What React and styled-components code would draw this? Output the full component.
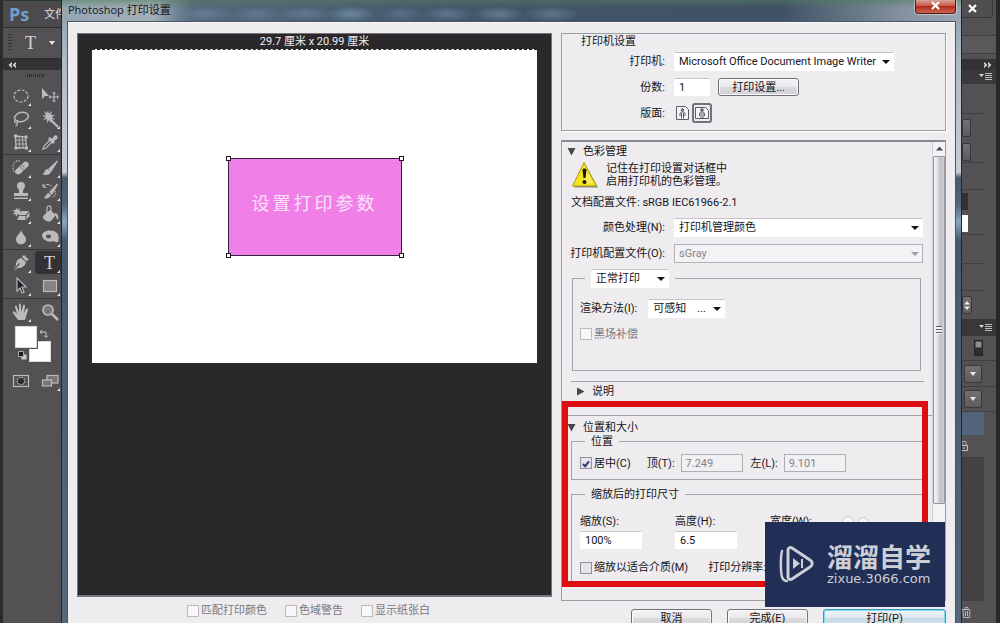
import React from "react";
import styled, { createGlobalStyle, css } from "styled-components";

const Global = createGlobalStyle`
  *, *::before, *::after { box-sizing: border-box; }
  html, body { margin: 0; height: 100%; background: #4f4d50; }
  #root { height: 100%; }
  body, button, input, select {
    font-family: Roboto, "Noto Sans CJK SC", sans-serif;
    font-size: 11px;
    line-height: 13px;
    color: #151417;
  }
`;

/* ---------- application behind the dialog ---------- */

const Desktop = styled.div`
  position: relative;
  height: 100vh;
  min-height: 600px;
  overflow: hidden;
  display: flex;
  justify-content: space-between;
  background: #4f4d50;
`;

const ToolDock = styled.aside`
  width: 64px;
  display: flex;
  flex-direction: column;
  border-left: 3px solid #2c2b2e;
  border-top: 1px solid #2b3a2f;
  background: #535154;
`;

const MenuBar = styled.header`
  height: 27px;
  display: flex;
  align-items: center;
  gap: 15px;
  padding-left: 6px;
  background: #4c4a4d;
  border-bottom: 1px solid #2d2b2e;
  color: #e4e2e5;
  white-space: nowrap;
`;

const Brand = styled.strong`
  font-family: "Open Sans", sans-serif;
  font-size: 18px;
  line-height: 24px;
  color: #6f9fcb;
`;

const OptionsBar = styled.div`
  height: 31px;
  display: flex;
  align-items: center;
  gap: 13px;
  padding-left: 5px;
  border-bottom: 1px solid #2e2c2f;
  color: #d8d6d9;
`;

const Grip = styled.span`
  width: 4px;
  height: 18px;
  background: repeating-linear-gradient(#363437 0 1px, transparent 1px 3px);
`;

const TypeGlyph = styled.span`
  font-family: "Liberation Serif", serif;
  font-size: 18px;
  line-height: 18px;
  color: #d2d0d3;
`;

const CollapseStrip = styled.div`
  height: 11px;
  display: flex;
  align-items: center;
  justify-content: ${(p) => (p.$end ? "flex-end" : "flex-start")};
  padding: ${(p) => (p.$end ? "0 4px 0 0" : "0 0 0 5px")};
  background: #343235;
`;

const ToolGrip = styled.div`
  width: 18px;
  height: 3px;
  margin: 4px 0 7px 24px;
  background: repeating-linear-gradient(90deg, #2f2d30 0 1px, transparent 1px 2px);
`;

const ToolGroup = styled.div`
  display: grid;
  grid-template-columns: 29px 29px;
  grid-auto-rows: 23px;
  padding: 0 0 1px 3px;
  margin-bottom: 1px;
  border-bottom: ${(p) => (p.$last ? "0" : "1px solid #39373a")};
`;

const ToolButton = styled.button`
  position: relative;
  display: grid;
  place-items: center;
  padding: 0;
  border: 0;
  border-radius: 3px;
  background: ${(p) => (p.$active ? "#333134" : "transparent")};
  color: #bcbabd;
  ${(p) =>
    p.$more &&
    css`
      &::after {
        content: "";
        position: absolute;
        right: 4px;
        bottom: 1px;
        border-left: 3px solid transparent;
        border-bottom: 3px solid #e6e4e7;
      }
    `}
`;

const SwatchArea = styled.div`
  display: grid;
  grid-template-columns: 14px 8px 14px;
  grid-template-rows: 15px 7px 14px;
  margin: 1px 0 7px 12px;
`;

const Swatch = styled.button`
  padding: 0;
  background: #fff;
  border: 1px solid #d9d7da;
  outline: ${(p) => (p.$front ? "1px solid #59575a" : "0")};
  z-index: ${(p) => (p.$front ? 1 : 0)};
  grid-area: ${(p) => (p.$front ? "1 / 1 / 3 / 3" : "2 / 2 / 4 / 4")};
`;

const MiniIcon = styled.span`
  grid-area: ${(p) => p.$area};
  display: grid;
  place-items: center;
`;

const PanelDock = styled.aside`
  width: 38px;
  display: flex;
  flex-direction: column;
  background: #535154;
  border-right: 4px solid #29272b;
`;

const WindowClose = styled.button`
  height: 18px;
  width: 31px;
  padding: 0 10px 0 0;
  display: grid;
  place-items: center;
  background: #504e51;
  border: 1px solid #39373a;
  border-top: 0;
  border-left: 0;
  border-radius: 0 0 3px 0;
`;

const DockBlock = styled.div`
  height: ${(p) => p.$h}px;
  display: flex;
  align-items: center;
  justify-content: ${(p) => p.$justify || "flex-start"};
  padding: ${(p) => p.$pad || "0"};
  background: ${(p) => p.$bg || "transparent"};
  border-bottom: ${(p) => (p.$line ? "1px solid #403e41" : "0")};
  margin-right: ${(p) => (p.$inset ? "12px" : "0")};
`;

const DockButton = styled.button`
  width: ${(p) => p.$w || 18}px;
  height: 18px;
  padding: 0;
  display: grid;
  place-items: center;
  background: linear-gradient(#727073, #5d5b5e);
  border: 1px solid #39373a;
  border-radius: 2px;
`;

const Chip = styled.span`
  width: ${(p) => p.$w}px;
  height: 17px;
  background: ${(p) => p.$bg};
`;

const DockFill = styled.div`
  flex: 1;
  margin-right: 12px;
  background: #434144;
`;

/* ---------- dialog ---------- */

const Dialog = styled.div`
  position: absolute;
  top: 0;
  left: 61px;
  right: 38px;
  display: flex;
  flex-direction: column;
  padding: 0 6px;
  border: solid #1f262e;
  border-width: 0 1px;
  background: linear-gradient(#8b9aab 0, #aebac6 60px, #c5ced6 172px, #46586a 178px, #53667a 205px, #86a7c2 222px, #475a6d 240px, #56687a 100%);
`;

const TitleBar = styled.div`
  height: 22px;
  margin: 0 -6px;
  display: flex;
  align-items: flex-start;
  justify-content: space-between;
  padding: 0 5px 0 6px;
  background:
    linear-gradient(rgba(82, 124, 92, 0.55), transparent 8px),
    radial-gradient(ellipse 30px 8px at 142px 14px, rgba(115, 145, 170, 0.5), transparent),
    radial-gradient(ellipse 26px 8px at 195px 14px, rgba(115, 145, 170, 0.45), transparent),
    radial-gradient(ellipse 28px 8px at 243px 14px, rgba(115, 145, 170, 0.5), transparent),
    radial-gradient(ellipse 24px 8px at 289px 14px, rgba(130, 165, 195, 0.6), transparent),
    radial-gradient(ellipse 22px 8px at 340px 14px, rgba(115, 145, 170, 0.4), transparent),
    radial-gradient(ellipse 26px 8px at 386px 14px, rgba(125, 150, 175, 0.5), transparent),
    radial-gradient(ellipse 26px 8px at 437px 14px, rgba(135, 160, 180, 0.5), transparent),
    radial-gradient(ellipse 28px 8px at 490px 14px, rgba(125, 150, 170, 0.5), transparent),
    linear-gradient(90deg, #95a5b2 0, #a3b0b9 90px, #55697c 130px, #43566a 45%, #3f5164 80%, #8593a2 94%, #9aa7b3);
`;

const Title = styled.h1`
  margin: 0;
  padding-top: 2px;
  font-family: "Open Sans", "Noto Sans CJK SC", sans-serif;
  font-size: 11px;
  line-height: 15px;
  font-weight: 400;
`;

const CloseButton = styled.button`
  width: 41px;
  height: 14px;
  padding: 0 0 3px;
  display: grid;
  place-items: center;
  border: 1px solid #4d1a15;
  border-top: 0;
  border-radius: 0 0 4px 4px;
  background: linear-gradient(#d9a096, #c8584a 45%, #b02c1b 50%, #cf6650);
  box-shadow: 0 0 1px 1px rgba(255, 255, 255, 0.45);
`;

const DialogBody = styled.main`
  display: flex;
  gap: 9px;
  padding: 10px 9px;
  min-height: 610px;
  background: #eeecef;
  border-top: 1px solid #f8f8fa;
  outline: 1px solid #4b5664;
`;

const PreviewColumn = styled.section`
  flex: 1;
  min-width: 0;
  display: flex;
  flex-direction: column;
`;

const PreviewPane = styled.div`
  height: 564px;
  padding: 0 14px;
  background: #2a282b;
  border: 1px solid #77757b;
  border-bottom-width: 2px;
`;

const PaperSize = styled.div`
  height: 15px;
  line-height: 15px;
  text-align: center;
  color: #f1eff2;
`;

const Paper = styled.div`
  aspect-ratio: 445 / 314;
  display: grid;
  place-items: center;
  background: #fff;
  border-top: 1px dashed #2a282b;
`;

const Artwork = styled.div`
  position: relative;
  width: 174px;
  height: 98px;
  padding-bottom: 6px;
  display: grid;
  place-items: center;
  background: #f080e8;
  border: 1px solid #33203a;
  color: #fbe0fa;
  font-size: 18px;
  line-height: 26px;
  font-weight: 400;
  letter-spacing: 3px;
`;

const Handle = styled.i`
  position: absolute;
  width: 5px;
  height: 5px;
  background: #fff;
  border: 1px solid #1c141f;
  ${(p) => p.$v}: -3px;
  ${(p) => p.$h}: -3px;
`;

const PreviewOptions = styled.div`
  display: flex;
  justify-content: center;
  gap: 18px;
  padding: 7px 12px 0 0;
`;

const CheckLabel = styled.label`
  display: inline-flex;
  align-items: center;
  gap: 2px;
  white-space: nowrap;
  color: ${(p) => (p.$dim ? "#7a787c" : "inherit")};
`;

const CheckBox = styled.input`
  appearance: none;
  width: 12px;
  height: 12px;
  margin: 0;
  display: grid;
  place-items: center;
  background: ${(p) => (p.disabled ? "#f7f6f8" : "#e3e4ea")};
  border: 1px solid ${(p) => (p.disabled ? "#bcbabf" : "#8f9098")};
  &:checked::after {
    content: "";
    width: 4px;
    height: 7px;
    border: solid #2b3a78;
    border-width: 0 2px 2px 0;
    transform: rotate(40deg);
  }
`;

const SettingsColumn = styled.section`
  position: relative;
  flex: 0 0 385px;
  display: flex;
  flex-direction: column;
`;

const PrinterGroup = styled.div`
  height: 98px;
  border: 1px solid #9e9ca3;
  box-shadow: 1px 1px 0 #fff;
`;

const GroupTitle = styled.h2`
  margin: 0 0 3px 19px;
  font-size: 11px;
  line-height: 15px;
  font-weight: 400;
`;

const FormRow = styled.div`
  display: grid;
  grid-template-columns: 103px 1fr;
  column-gap: 9px;
  align-items: center;
  min-height: ${(p) => p.$h || 26}px;
`;

const RowLabel = styled.label`
  text-align: right;
  white-space: nowrap;
`;

const Inline = styled.div`
  display: flex;
  align-items: center;
  gap: ${(p) => p.$gap || 8}px;
  white-space: nowrap;
`;

const SelectWrap = styled.span`
  position: relative;
  display: block;
  width: ${(p) => p.$w}px;
  height: 19px;
`;

const NativeSelect = styled.select`
  appearance: none;
  width: 100%;
  height: 100%;
  padding: 0 0 0 4px;
  background: ${(p) => (p.disabled ? "#f3f2f4" : "#fff")};
  border: 1px solid ${(p) => (p.disabled ? "#b4b2b8" : "#fff")};
  border-top-color: ${(p) => (p.disabled ? "#b4b2b8" : "#c4c2c8")};
  border-radius: 0;
  color: ${(p) => (p.disabled ? "#858388" : "#151417")};
  opacity: 1;
`;

const Caret = styled.i`
  position: absolute;
  right: 4px;
  top: 8px;
  pointer-events: none;
  border: 4px solid transparent;
  border-top-color: ${(p) => (p.$dim ? "#a09ea4" : "#111")};
  border-bottom: 0;
`;

const TextInput = styled.input`
  width: ${(p) => p.$w || 62}px;
  height: 18px;
  padding: 0 4px;
  border: 1px solid ${(p) => (p.disabled ? "#b1afb6" : "#fff")};
  border-top-color: ${(p) => (p.disabled ? "#b1afb6" : "#c9c7cc")};
  background: ${(p) => (p.disabled ? "#f1f0f2" : "#fff")};
  color: ${(p) => (p.disabled ? "#858388" : "#151417")};
`;

const PushButton = styled.button`
  width: ${(p) => p.$w}px;
  height: 18px;
  padding: 0;
  border: 1px solid ${(p) => (p.$primary ? "#3d95b5" : "#737178")};
  border-radius: 3px;
  background: ${(p) => (p.$primary
    ? "linear-gradient(#f0f6f9, #dbe9f0 50%, #c6dbe6 52%, #d6e8f0)"
    : "linear-gradient(#f4f3f5, #e9e8eb 50%, #dbdadd 52%, #d2d1d5)")};
  box-shadow: inset 0 0 0 1px ${(p) => (p.$primary ? "#7fdcf5" : "#fbfbfc")};
`;

const OrientButton = styled.button`
  width: ${(p) => (p.$on ? 20 : 16)}px;
  height: 20px;
  padding: 0;
  display: grid;
  place-items: center;
  border: ${(p) => (p.$on ? "2px solid #737078" : "0")};
  border-radius: 3px;
  background: transparent;
`;

const ScrollPanel = styled.div`
  height: 461px;
  margin-top: 9px;
  display: flex;
  border: 1px solid #9e9ca3;
  border-top: 2px solid #8b898f;
`;

const ScrollContent = styled.div`
  flex: 1;
  min-width: 0;
`;

const ScrollBar = styled.div`
  width: 13px;
  padding-top: 4px;
  display: flex;
  flex-direction: column;
  align-items: center;
  border-left: 1px solid #d2d0d5;
  background: #f3f2f5;
`;

const ScrollThumb = styled.div`
  width: 12px;
  height: 348px;
  margin-top: 5px;
  display: grid;
  place-items: center;
  border: 1px solid #98969d;
  border-radius: 1px;
  background: linear-gradient(90deg, #f4f3f6, #e0dfe4 40%, #bfbdc6 60%, #d0ced5);
`;

const ThumbGrip = styled.i`
  width: 6px;
  height: 8px;
  background: repeating-linear-gradient(#5e5c63 0 1px, #f1f0f3 1px 3px);
`;

const SectionHead = styled.h2`
  margin: 0;
  height: 18px;
  display: flex;
  align-items: center;
  gap: 7px;
  padding-left: ${(p) => (p.$closed ? 14 : 5)}px;
  font-size: 11px;
  font-weight: 400;
`;

const Warning = styled.div`
  display: flex;
  align-items: center;
  gap: 7px;
  height: 30px;
  padding-left: 9px;
`;

const WarningText = styled.p`
  margin: 0;
  line-height: 13px;
`;

const ProfileLine = styled.p`
  margin: 5px 0 4px 9px;
  line-height: 15px;
`;

const Frame = styled.fieldset`
  min-width: 0;
  margin: ${(p) => p.$m};
  padding: ${(p) => p.$p};
  border: 1px solid #a5a3aa;
  height: ${(p) => p.$h}px;
`;

const Legend = styled.legend`
  margin-left: 5px;
  padding: 0 6px;
  line-height: 15px;
`;

const Rule = styled.hr`
  margin: ${(p) => p.$m};
  border: 0;
  border-top: 1px solid #a3a1a8;
`;

const SizeGrid = styled.div`
  display: grid;
  grid-template-columns: 95px 95px 1fr;
  padding-bottom: 12px;
`;

const SizeField = styled.label`
  display: flex;
  flex-direction: column;
  gap: 3px;
  white-space: nowrap;
`;

const Highlight = styled.div`
  position: absolute;
  top: 368px;
  left: 1px;
  width: 366px;
  height: 186px;
  border: 6px solid #dc0f12;
  pointer-events: none;
`;

const Badge = styled.div`
  position: absolute;
  top: 489px;
  right: 1px;
  width: 180px;
  height: 85px;
  display: flex;
  align-items: center;
  gap: 13px;
  padding-left: 14px;
  background: #212e56;
  color: #cdcfd6;
`;

const BadgeText = styled.div`
  display: flex;
  flex-direction: column;
`;

const BadgeName = styled.span`
  font-size: 26px;
  line-height: 28px;
  font-weight: 700;
`;

const BadgeUrl = styled.span`
  font-family: "DejaVu Sans", sans-serif;
  font-size: 13px;
  line-height: 13px;
`;

const Actions = styled.div`
  display: flex;
  justify-content: flex-end;
  gap: 15px;
  padding-top: 8px;
`;

/* ---------- drawings ---------- */

const Svg = ({ children, w = 18, h = 18, box = "0 0 18 18" }) => (
  <svg width={w} height={h} viewBox={box} fill="none" stroke="currentColor" strokeWidth="1.2" aria-hidden="true">
    {children}
  </svg>
);

const icons = {
  marquee: <Svg><ellipse cx="9" cy="9" rx="7" ry="6" strokeDasharray="3 1.4" /></Svg>,
  move: <Svg><path d="M1 1v11l3-3h4z" fill="currentColor" stroke="none" /><path d="M13 6v8M9 10h8" /><path d="M13 4.500l-2 2h4zM13 15.500l-2-2h4zM7.500 10l2-2v4zM18 10l-2-2v4z" fill="currentColor" stroke="none" /></Svg>,
  lasso: <Svg><ellipse cx="9.500" cy="7" rx="7" ry="4.500" transform="rotate(-12 9.500 7)" strokeWidth="1.500" /><path d="M4 10c-2 0-2 3 0 3 2 0 2-2 .6-2.600M5 12.500c1 1.500 0 3-1.500 3.500" /></Svg>,
  wand: <Svg><path d="M9.500 9.500L17 17" strokeWidth="2.200" /><path d="M7 0l1 4 3-3-1 4 4 0-3 2 3 3-4-1 0 4-2-3-2 3 0-4-4 1 3-3-4-1 4-1-2-4 3 2z" fill="currentColor" stroke="none" /></Svg>,
  crop: <Svg><path d="M3.500 3l10 1 1 11H4z" strokeWidth="1.300" /><path d="M7 3.500l.5 11.500M10.500 4l.5 11M4 7h10M4 11h10.500" strokeWidth="0.900" /><path d="M2 1.500h3v3H2zM12.500 2.500h3v3h-3zM13 13.500h3v3h-3zM2.500 13.500h3v3h-3z" fill="currentColor" stroke="none" /></Svg>,
  dropper: <Svg><path d="M11 6l2-3c2-2 5 1 3 3l-3 2 1 1-2 2-5-5 2-2z" fill="currentColor" stroke="none" /><path d="M9 7l-6 6-1 3 3-1 6-6" /></Svg>,
  heal: <Svg><path d="M8 2C4 1 1 4 1 8c0 3 1 5 3 6" strokeDasharray="1.500 1.300" /><rect x="2" y="6" width="16" height="6" rx="3" transform="rotate(-43 10 9)" fill="currentColor" stroke="none" /><path d="M8 8l4 3M10 6l3 3" stroke="#666468" strokeDasharray="1 1" /></Svg>,
  brush: <Svg><path d="M16.500 2L8 10l2 2z" fill="currentColor" /><path d="M1 15c3 0 2-5 6-5l3 3c-1 3-5 4-9 2z" fill="currentColor" stroke="none" /></Svg>,
  stamp: <Svg><path d="M7 9c0-2-2-3-2-5a4 4 0 018 0c0 2-2 3-2 5v2h5v3H2v-3h5zM2 15.500h14V17H2z" fill="currentColor" stroke="none" /></Svg>,
  history: <Svg><path d="M16.500 2L9 10l2 2z" fill="currentColor" /><path d="M2 16c3 0 2-4 6-5l2 2c-1 3-4 4-8 3z" fill="currentColor" stroke="none" /><path d="M2 5c2-3 6-3 8-1M2 2v3.500h3.500" strokeDasharray="3 1" /><path d="M14 9c2 3 0 5-3 6" strokeDasharray="1.500 1" /></Svg>,
  eraser: <Svg><path d="M5 3l1 2 2-2-.5 3L11 7 8 8l1 3-3-2-2 3-.5-3-3 .5L3 7 0 5l3 .3z" fill="currentColor" stroke="none" /><path d="M10 6h7l-3 4H7zM7 11h6.500v4H5zM14.500 11L17.500 7v4l-3 3.500z" fill="currentColor" stroke="none" /></Svg>,
  bucket: <Svg><path d="M2 11l7-6 6 5-5 6c-3 2-9-2-8-5z" fill="currentColor" stroke="none" /><path d="M6 9V3c0-3 4-3 4 0v5" /><path d="M14 8c3 0 4 4 3 7-2-1-1-3-3-5z" fill="currentColor" stroke="none" /></Svg>,
  blur: <Svg><path d="M9 2c1 4 5 6 5 9.500a5 5 0 01-10 0C4 8 8 6 9 2z" fill="currentColor" stroke="none" /></Svg>,
  sponge: <Svg><path fillRule="evenodd" d="M1 7c1-5 11-6 15-2 2 2 2 6 1 9-2 1-3-1-5-1-3 1-5 1-8-1C2 11 1 9 1 7zm4 1.500a2.500 2 0 005 0 2.500 2 0 00-5 0z" fill="currentColor" stroke="none" /></Svg>,
  pen: <Svg><path d="M12 1l5 5-3 1-4-4z" fill="currentColor" stroke="none" /><path d="M9 4l5 4c-1 4-4 6-8 6l-4 2.500L8 10 7 9l-5.500 6.500L4 11c0-4 2-6 5-7z" fill="currentColor" stroke="none" /></Svg>,
  path: <Svg><path d="M5 1v13l3-3 2 5 2-1-2-5h4z" fill="#222024" stroke="#b9b7bb" /></Svg>,
  shape: <Svg><rect x="2.500" y="3.500" width="13" height="11" fill="#858387" /></Svg>,
  hand: <Svg><path d="M6 17L1 10c-1-2 1-2 2-1l2 2L3 4c0-2 2-2 2 0l2 5V2c0-2 2-2 2 0v7l2-6c.5-2 2-1 2 0l-1 7 2-4c1-1 2.500-.5 2 1l-3 10z" fill="currentColor" stroke="none" /></Svg>,
  zoom: <Svg><circle cx="7" cy="7" r="5" fill="#777579" strokeWidth="1.700" /><path d="M11 11l6 6" strokeWidth="2.500" /></Svg>,
  mask: <Svg><rect x="1.500" y="3.500" width="15" height="11" /><circle cx="9" cy="9" r="3.700" fill="#2c2a2d" strokeDasharray="1.500 1" /></Svg>,
  screen: <Svg><rect x="6" y="3.500" width="11" height="7.500" fill="#777579" /><rect x="1.500" y="8" width="9" height="6" fill="#777579" /></Svg>,
};

const Arrows = ({ flip }) => (
  <svg width="8" height="6" viewBox="0 0 8 6" aria-hidden="true">
    <path d={flip ? "M0 0l3.500 3L0 6V4l1-1-1-1zM4 0l3.500 3L4 6V4l1-1-1-1z" : "M4 0L.5 3 4 6V4L3 3l1-1zM8 0L4.500 3 8 6V4L7 3l1-1z"} fill="#dddbde" />
  </svg>
);

const SmallCaret = () => (
  <svg width="6" height="4" viewBox="0 0 6 4" aria-hidden="true"><path d="M0 0h6L3 4z" fill="#e9e7ea" /></svg>
);

const PanelMenu = () => (
  <svg width="13" height="8" viewBox="0 0 13 8" aria-hidden="true">
    <path d="M0 1h5L2.500 4z" fill="#d9d7da" />
    <path d="M6 .5h7M6 2.500h7M6 4.500h7M6 6.500h7" stroke="#bab8bb" strokeWidth="1" />
  </svg>
);

const Cross = () => (
  <svg width="9" height="9" viewBox="0 0 9 9" aria-hidden="true">
    <path d="M1 1l7 7M8 1L1 8" stroke="#fff" strokeWidth="2.200" />
  </svg>
);

const Disclosure = ({ closed }) => (
  <svg width="9" height="9" viewBox="0 0 9 9" aria-hidden="true">
    <path d={closed ? "M1 0.500v8l7.500-4z" : "M0.500 1h8l-4 7.500z"} fill="#48464b" />
  </svg>
);

const WarningIcon = () => (
  <svg width="28" height="28" viewBox="0 0 28 28" aria-hidden="true">
    <path d="M14 3L27 26.500H3z" fill="#4a4a3c" opacity=".6" />
    <path d="M13 1.500L25.500 25H1.500z" fill="#f4e41c" stroke="#a89a10" strokeLinejoin="round" />
    <path d="M13 4l9 18-8 1z" fill="#fbf582" opacity=".6" />
    <path d="M11.500 9c0-2 4-2 4 0l-1 8h-2z" fill="#171505" />
    <circle cx="13.500" cy="21" r="2" fill="#171505" />
  </svg>
);

const PageIcon = ({ wide }) => (
  <svg width={wide ? 16 : 13} height="14" viewBox={wide ? "0 0 16 14" : "0 0 13 14"} fill="none" stroke="#5d5b61" aria-hidden="true">
    <path d={wide ? "M1.500 1.500h10l3 3v8h-13z" : "M.5.500h9l3 3v10H.5z"} fill="#f6f5f7" />
    <g transform={wide ? "translate(1.500 0)" : ""}>
      <circle cx="6.500" cy="4" r="1.300" fill="#8a888e" />
      <path d="M4 10V7.500c0-1 1-1.500 2.500-1.500S9 6.500 9 7.500V10M5.500 7v5.500M7.500 7v5.500" />
    </g>
  </svg>
);

const LinkMark = () => (
  <svg width="30" height="13" viewBox="0 0 30 13" fill="#f8f7f9" stroke="#c9c7cc" aria-hidden="true">
    <circle cx="8" cy="7" r="5.500" />
    <circle cx="23" cy="7.500" r="5" />
  </svg>
);

const PlayMark = () => (
  <svg width="35" height="37" viewBox="0 0 35 37" fill="none" stroke="#cdcfd6" strokeWidth="3" strokeLinejoin="round" aria-hidden="true">
    <path d="M9 4c0-2 2-3 4-2l18 12c3 2 3 5 0 7L13 33c-2 1-4 0-4-2z" />
    <path d="M3 5C1.500 10 1.500 26 3 31c1 2.500 3 4 5 4" strokeWidth="2.500" strokeLinecap="round" />
    <path d="M14 12l7 5.500-7 5.500z" fill="#cdcfd6" stroke="none" />
    <path d="M23 13v9" strokeWidth="2" />
  </svg>
);

/* ---------- composed controls ---------- */

const Tool = ({ name, more = true, active, children }) => (
  <ToolButton aria-label={name} $more={more} $active={active}>{children || icons[name]}</ToolButton>
);

const Select = ({ id, w, value, disabled, label }) => (
  <SelectWrap $w={w}>
    <NativeSelect id={id} disabled={disabled} aria-label={label} defaultValue={value}>
      <option>{value}</option>
    </NativeSelect>
    <Caret $dim={disabled} />
  </SelectWrap>
);

const Check = ({ children, disabled, checked }) => (
  <CheckLabel $dim={disabled}>
    <CheckBox type="checkbox" disabled={disabled} defaultChecked={checked} />
    {children}
  </CheckLabel>
);

const ToolPanel = () => (
  <ToolDock>
    <MenuBar><Brand>Ps</Brand><span>文件</span></MenuBar>
    <OptionsBar>
      <Grip />
      <TypeGlyph>T</TypeGlyph>
      <SmallCaret />
    </OptionsBar>
    <CollapseStrip><Arrows /></CollapseStrip>
    <ToolGrip />
    <ToolGroup>
      <Tool name="marquee" /><Tool name="move" more={false} />
      <Tool name="lasso" /><Tool name="wand" />
      <Tool name="crop" /><Tool name="dropper" />
    </ToolGroup>
    <ToolGroup>
      <Tool name="heal" /><Tool name="brush" />
      <Tool name="stamp" /><Tool name="history" />
      <Tool name="eraser" /><Tool name="bucket" />
      <Tool name="blur" /><Tool name="sponge" />
    </ToolGroup>
    <ToolGroup>
      <Tool name="pen" /><Tool name="type" active><TypeGlyph>T</TypeGlyph></Tool>
      <Tool name="path" /><Tool name="shape" />
    </ToolGroup>
    <ToolGroup $last>
      <Tool name="hand" /><Tool name="zoom" more={false} />
    </ToolGroup>
    <SwatchArea>
      <Swatch $front aria-label="foreground" />
      <Swatch aria-label="background" />
      <MiniIcon $area="1 / 3">
        <svg width="10" height="10" viewBox="0 0 10 10" fill="none" stroke="#c9c7ca"><path d="M1 3h6v5M3 1L1 3l2 2M5 6.500l2 2 2-2" /></svg>
      </MiniIcon>
      <MiniIcon $area="3 / 1">
        <svg width="9" height="9" viewBox="0 0 9 9"><path d="M3.500 3.500h5v5h-5z" fill="#cfcdd0" /><path d="M.5.5h5v5h-5z" fill="#1c1a1d" stroke="#a9a7aa" /></svg>
      </MiniIcon>
    </SwatchArea>
    <ToolGroup $last>
      <Tool name="mask" more={false} /><Tool name="screen" />
    </ToolGroup>
  </ToolDock>
);

const Panels = () => (
  <PanelDock>
    <WindowClose aria-label="close window"><Cross /></WindowClose>
    <DockBlock $h={18} $line />
    <DockBlock $h={18} $bg="#5b595c" $line />
    <DockBlock $h={5} />
    <CollapseStrip $end><Arrows flip /></CollapseStrip>
    <DockBlock $h={14} $bg="#3b393c" $justify="flex-end" $pad="0 4px 0 0"><PanelMenu /></DockBlock>
    <DockBlock $h={30} $line $inset />
    <DockBlock $h={27}><DockButton $w={9} aria-label="adjust" /></DockBlock>
    <DockBlock $h={22} $line $inset><DockButton $w={9} aria-label="adjust" /></DockBlock>
    <DockBlock $h={27} $line $inset />
    <DockBlock $h={22}><Chip $w={6} $bg="#323033" /></DockBlock>
    <DockBlock $h={23} $line $inset><Chip $w={6} $bg="#fff" /></DockBlock>
    <DockBlock $h={29} $line $inset />
    <DockBlock $h={27} $line $inset />
    <DockBlock $h={28}>
      <DockButton $w={10} aria-label="opacity">
        <svg width="6" height="9" viewBox="0 0 6 9"><path d="M0 3.500L3 0l3 3.500zM0 5.500L3 9l3-3.500z" fill="#eee" /></svg>
      </DockButton>
    </DockBlock>
    <DockBlock $h={17} $bg="#39373a" $justify="flex-end" $pad="0 4px 0 0"><PanelMenu /></DockBlock>
    <DockBlock $h={25} $line $pad="0 0 0 12px">
      <svg width="9" height="16" viewBox="0 0 9 16"><path d="M.5.5h8v15h-8z" fill="#2f2d30" stroke="#252326" /><path d="M1.500 1.500h6v6h-6z" fill="#8d8b8e" /></svg>
    </DockBlock>
    <DockBlock $h={26} $line $pad="0 0 0 2px"><DockButton aria-label="blend"><SmallCaret /></DockButton></DockBlock>
    <DockBlock $h={25} $line $pad="0 0 0 2px"><DockButton aria-label="lock"><SmallCaret /></DockButton></DockBlock>
    <DockBlock $h={23} $bg="#52647a" $inset />
    <DockBlock $h={23} $line $inset>
      <svg width="8" height="12" viewBox="0 0 8 12" fill="none" stroke="#c4c2c5"><path d="M-1.500 5.500h7v5h-7zM0 5V2.500C0 1 4 1 4 2.500V5M2 7v2" /></svg>
    </DockBlock>
    <DockFill />
    <DockBlock $h={22}>
      <svg width="9" height="11" viewBox="0 0 9 11" fill="none" stroke="#b9b7ba"><path d="M0 2.500h8M3 2V.5h3V2M1 3l.5 7.500h6L8 3M3.500 4v5M5.500 4v5" /></svg>
    </DockBlock>
  </PanelDock>
);

export default function App() {
  return (
    <>
      <Global />
      <Desktop>
        <ToolPanel />
        <Panels />
        <Dialog role="dialog" aria-labelledby="dialog-title">
          <TitleBar>
            <Title id="dialog-title">Photoshop 打印设置</Title>
            <CloseButton aria-label="close"><Cross /></CloseButton>
          </TitleBar>
          <DialogBody>
            <PreviewColumn>
              <PreviewPane>
                <PaperSize>29.7 厘米 x 20.99 厘米</PaperSize>
                <Paper>
                  <Artwork>
                    设置打印参数
                    <Handle $v="top" $h="left" /><Handle $v="top" $h="right" />
                    <Handle $v="bottom" $h="left" /><Handle $v="bottom" $h="right" />
                  </Artwork>
                </Paper>
              </PreviewPane>
              <PreviewOptions>
                <Check disabled>匹配打印颜色</Check>
                <Check disabled>色域警告</Check>
                <Check disabled>显示纸张白</Check>
              </PreviewOptions>
            </PreviewColumn>

            <SettingsColumn>
              <PrinterGroup>
                <GroupTitle>打印机设置</GroupTitle>
                <FormRow $h={19}>
                  <RowLabel htmlFor="printer">打印机:</RowLabel>
                  <Select id="printer" w={220} value="Microsoft Office Document Image Writer" />
                </FormRow>
                <FormRow $h={32}>
                  <RowLabel htmlFor="copies">份数:</RowLabel>
                  <Inline>
                    <TextInput id="copies" $w={36} defaultValue="1" />
                    <PushButton $w={81}>打印设置...</PushButton>
                  </Inline>
                </FormRow>
                <FormRow $h={20}>
                  <RowLabel as="span">版面:</RowLabel>
                  <Inline $gap={2}>
                    <OrientButton aria-label="portrait"><PageIcon /></OrientButton>
                    <OrientButton aria-label="landscape" $on><PageIcon wide /></OrientButton>
                  </Inline>
                </FormRow>
              </PrinterGroup>

              <ScrollPanel>
                <ScrollContent>
                  <SectionHead><Disclosure />色彩管理</SectionHead>
                  <Warning>
                    <WarningIcon />
                    <WarningText>记住在打印设置对话框中<br />启用打印机的色彩管理。</WarningText>
                  </Warning>
                  <ProfileLine>文档配置文件: sRGB IEC61966-2.1</ProfileLine>
                  <FormRow>
                    <RowLabel htmlFor="handling">颜色处理(N):</RowLabel>
                    <Select id="handling" w={249} value="打印机管理颜色" />
                  </FormRow>
                  <FormRow>
                    <RowLabel htmlFor="profile">打印机配置文件(O):</RowLabel>
                    <Select id="profile" w={249} value="sGray" disabled />
                  </FormRow>
                  <Frame $m="3px 11px 0 10px" $p="11px 7px 0" $h={102}>
                    <Legend><Select w={78} value="正常打印" label="打印模式" /></Legend>
                    <Inline $gap={11}>
                      <label htmlFor="intent">渲染方法(I):</label>
                      <Select id="intent" w={77} value="可感知　..." />
                    </Inline>
                    <FormRow $h={32}><Check disabled>黑场补偿</Check></FormRow>
                  </Frame>
                  <Rule $m="10px 8px 0 9px" />
                  <SectionHead $closed><Disclosure closed />说明</SectionHead>
                  <Rule $m="15px 0 2px 0" />
                  <SectionHead><Disclosure />位置和大小</SectionHead>
                  <Frame $m="-2px 6px 0 9px" $p="5px 8px 0" $h={46}>
                    <Legend>位置</Legend>
                    <Inline $gap={16}>
                      <Check checked>居中(C)</Check>
                      <Inline>
                        <Inline as="label" $gap={6}>顶(T): <TextInput disabled defaultValue="7.249" /></Inline>
                        <Inline as="label" $gap={6}>左(L): <TextInput disabled defaultValue="9.101" /></Inline>
                      </Inline>
                    </Inline>
                  </Frame>
                  <Frame $m="7px 6px 0 9px" $p="13px 8px 0" $h={96}>
                    <Legend>缩放后的打印尺寸</Legend>
                    <SizeGrid>
                      <SizeField>缩放(S):<TextInput defaultValue="100%" /></SizeField>
                      <SizeField>高度(H):<TextInput defaultValue="6.5" /></SizeField>
                      <SizeField><Inline as="span" $gap={28}>宽度(W):<LinkMark /></Inline><TextInput /></SizeField>
                    </SizeGrid>
                    <Inline $gap={20}>
                      <Check>缩放以适合介质(M)</Check>
                      <span>打印分辨率:</span>
                    </Inline>
                  </Frame>
                </ScrollContent>
                <ScrollBar>
                  <svg width="7" height="5" viewBox="0 0 7 5" aria-hidden="true"><path d="M0 4.500L3.500.5 7 4.500z" fill="#48464b" /></svg>
                  <ScrollThumb><ThumbGrip /></ScrollThumb>
                </ScrollBar>
              </ScrollPanel>

              <Actions>
                <PushButton $w={81}>取消</PushButton>
                <PushButton $w={81}>完成(E)</PushButton>
                <PushButton $w={123} $primary>打印(P)</PushButton>
              </Actions>

              <Highlight />
              <Badge>
                <PlayMark />
                <BadgeText>
                  <BadgeName>溜溜自学</BadgeName>
                  <BadgeUrl>zixue.3066.com</BadgeUrl>
                </BadgeText>
              </Badge>
            </SettingsColumn>
          </DialogBody>
        </Dialog>
      </Desktop>
    </>
  );
}
